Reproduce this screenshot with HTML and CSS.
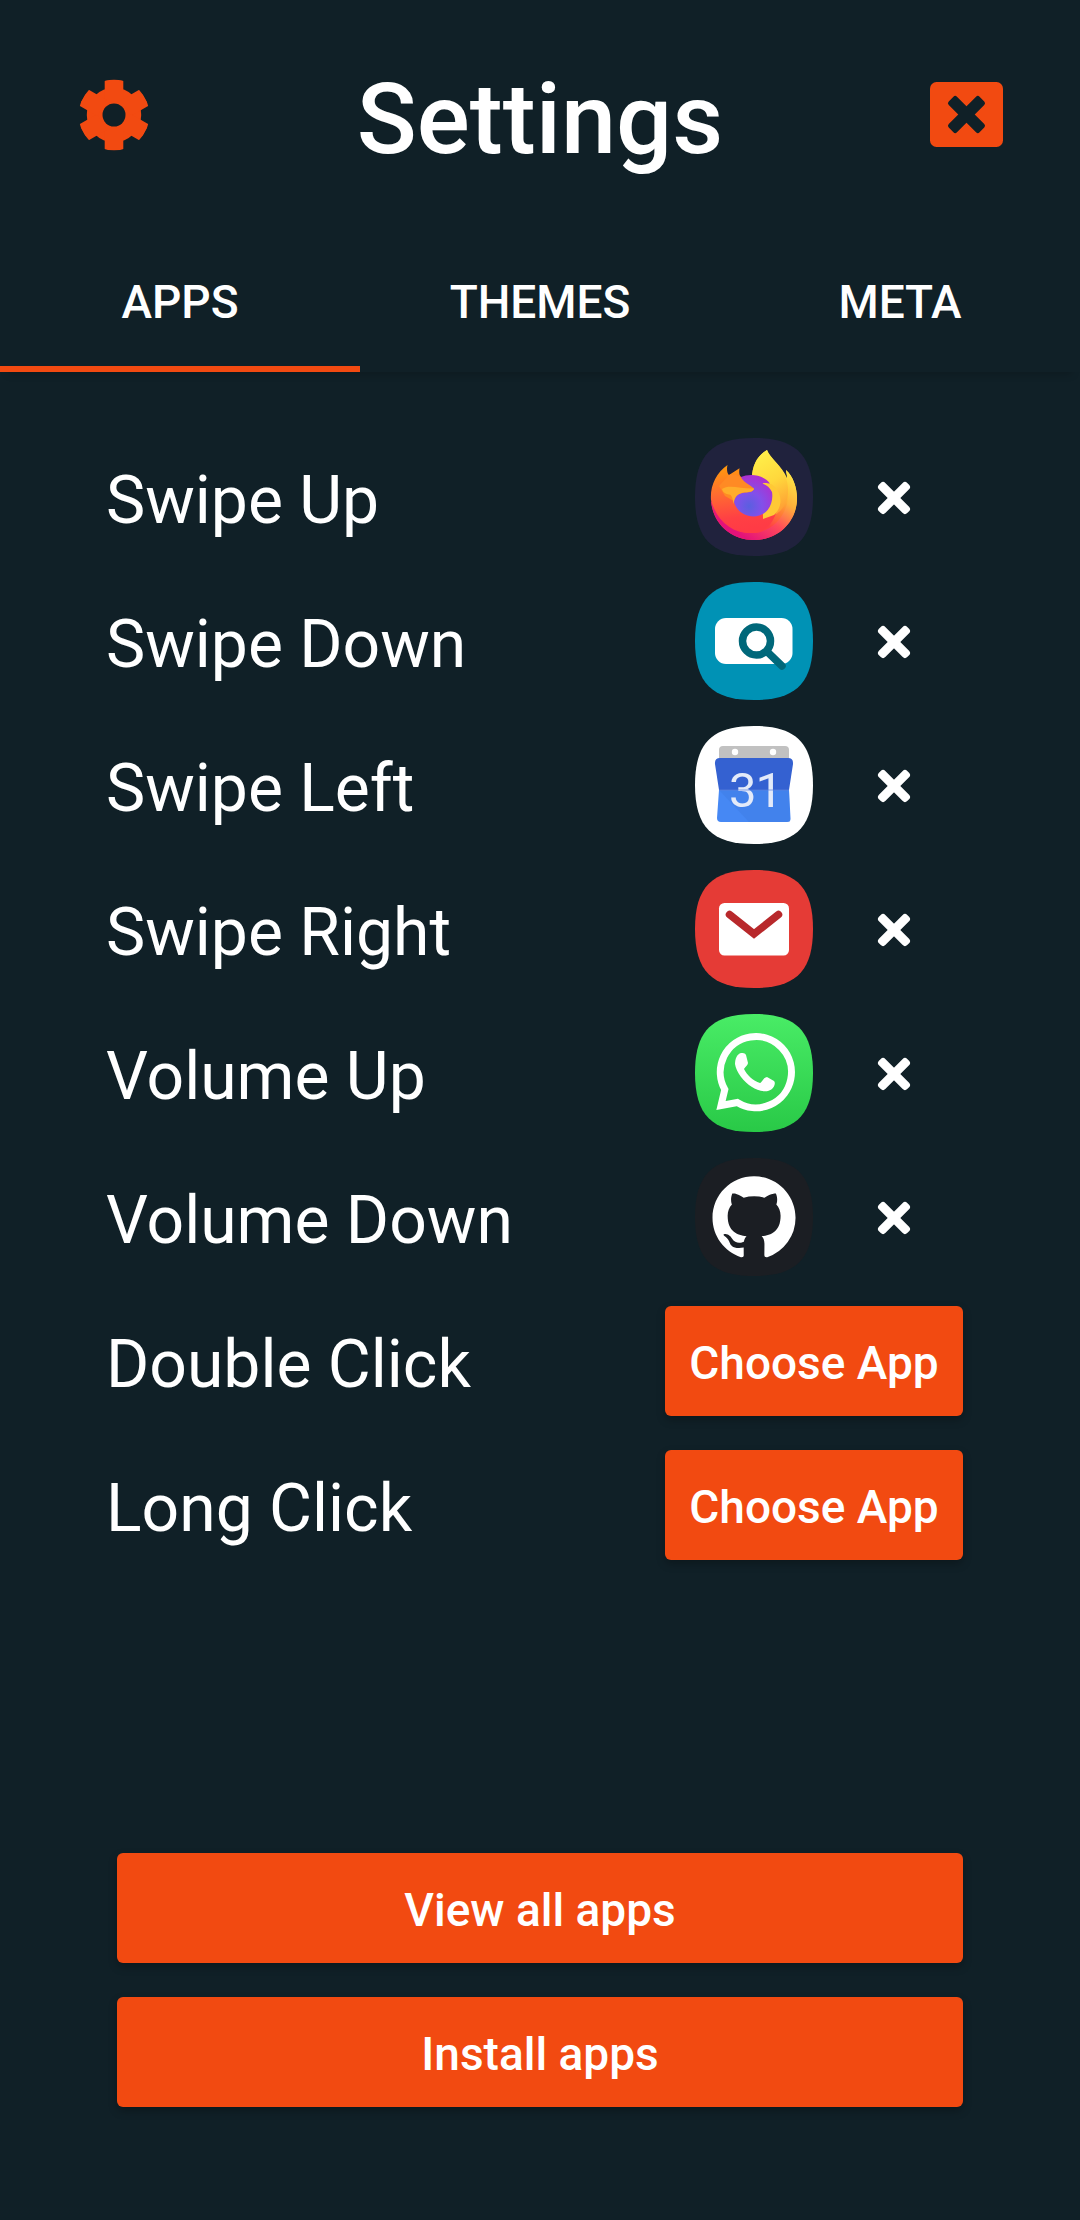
FILE: index.html
```html
<!DOCTYPE html>
<html lang="en">
<head>
<meta charset="utf-8">
<title>Settings</title>
<link rel="stylesheet" href="styles.css">
</head>
<body>
<svg width="0" height="0" class="defs" aria-hidden="true">
  <defs>
    <path id="squircle" d="M59 0C101 0 118 17 118 59S101 118 59 118 0 101 0 59 17 0 59 0Z"/>
    <g id="cross">
      <rect x="-4" y="11.500" width="40" height="9" rx="3.200" transform="rotate(45 16 16)"/>
      <rect x="-4" y="11.500" width="40" height="9" rx="3.200" transform="rotate(-45 16 16)"/>
    </g>
    <linearGradient id="ffBody" x1="0.85" y1="0.1" x2="0.25" y2="0.9">
      <stop offset="0" stop-color="#fff44f"/><stop offset=".3" stop-color="#ffc234"/><stop offset=".52" stop-color="#ff7a36"/><stop offset=".7" stop-color="#ff4143"/><stop offset="1" stop-color="#ff3647"/>
    </linearGradient>
    <linearGradient id="ffFace" gradientUnits="userSpaceOnUse" x1="38" y1="28" x2="46" y2="92">
      <stop offset="0" stop-color="#ff980e"/><stop offset=".4" stop-color="#ff6d30"/><stop offset=".8" stop-color="#ff4044"/><stop offset="1" stop-color="#ff3b45"/>
    </linearGradient>
    <linearGradient id="ffTail" x1="0.3" y1="0" x2="0.6" y2="1">
      <stop offset="0" stop-color="#fff04a"/><stop offset=".5" stop-color="#ffd83c"/><stop offset="1" stop-color="#ff9a34"/>
    </linearGradient>
    <linearGradient id="ffEdge" gradientUnits="userSpaceOnUse" x1="96" y1="34" x2="50" y2="100">
      <stop offset="0" stop-color="#ffe847"/><stop offset=".35" stop-color="#ffb03a"/><stop offset=".65" stop-color="#ff4a5a"/><stop offset="1" stop-color="#e3127a"/>
    </linearGradient>
    <radialGradient id="ffGlobe" cx=".4" cy=".75" r=".75">
      <stop offset="0" stop-color="#5a5fe0"/><stop offset=".45" stop-color="#8250ea"/><stop offset="1" stop-color="#ae2fcf"/>
    </radialGradient>
    <linearGradient id="waBg" x1="0" y1="0" x2="0" y2="1">
      <stop offset="0" stop-color="#49ec66"/><stop offset="1" stop-color="#29c947"/>
    </linearGradient>
    <clipPath id="gearClip"><circle cx="36" cy="36" r="35.500"/></clipPath>
  </defs>
</svg>
<div class="screen">
  <header class="header">
    <svg class="gear" viewBox="0 0 72 72">
      <g clip-path="url(#gearClip)" fill="#f24a11">
        <circle cx="36" cy="36" r="27.200"/>
        <path id="tooth" d="M26.700 22V2Q26.700 .5 28.500 .5H43.500Q45.300 .5 45.300 2V22Z"/>
        <use href="#tooth" transform="rotate(60 36 36)"/>
        <use href="#tooth" transform="rotate(120 36 36)"/>
        <use href="#tooth" transform="rotate(180 36 36)"/>
        <use href="#tooth" transform="rotate(240 36 36)"/>
        <use href="#tooth" transform="rotate(300 36 36)"/>
      </g>
      <circle cx="36" cy="36" r="11.500" fill="#102027"/>
    </svg>
    <h1 class="title">Settings</h1>
    <svg class="close" viewBox="0 0 73 65">
      <rect width="73" height="65" rx="6.500" fill="#f24a11"/>
      <g fill="#102027">
        <rect x="14.700" y="26.700" width="43.600" height="11.600" rx="2.500" transform="rotate(45 36.500 32.500)"/>
        <rect x="14.700" y="26.700" width="43.600" height="11.600" rx="2.500" transform="rotate(-45 36.500 32.500)"/>
      </g>
    </svg>
  </header>
  <nav class="tabs">
    <div class="tab active">APPS</div>
    <div class="tab">THEMES</div>
    <div class="tab">META</div>
  </nav>
  <main class="rows">
    <div class="row"><span class="label">Swipe Up</span>
      <svg class="app" viewBox="0 0 118 118">
        <use href="#squircle" fill="#20223d"/>
        <path fill="url(#ffBody)" d="M16 60C16 75 30 55 57 40C57 27 63 17 72 12C75 20 87 28 92 40C92 37 91 34 91 32C98 38 102 50 102 60C102 84 83 102 59 102S16 84 16 60Z"/>
        <path fill="url(#ffEdge)" d="M91 32C98 38 102 50 102 60C102 84 83 102 59 102C37 102 18 87 16 62C24 85 40 96 60 95C82 92 96 72 94 45C93 39 91 35 91 32Z"/>
        <path fill="url(#ffTail)" d="M57 40C57 27 63 17 72 12C75 22 92 30 93 50C94 66 86 75 75 79C83 65 76 50 64 42Z"/>
        <path fill="url(#ffFace)" d="M32.500 27C31.500 31 32 35 34 37L44.500 30.300C44 34 44 37 46 39L50 60L50 76L82 72C78 86 70 95 58 95C38 96 22 84 16 62C15 48 21 35 32.500 27Z"/>
        <path fill="#ffc935" d="M67.500 45.500C71 44.500 73 46 76 46C87 53 89 68 79 77L68 81Z"/>
        <path fill="url(#ffGlobe)" d="M46 39C54 35.500 68 36 75 45.500C72 45.500 70 44.500 67.500 45.500C72 47 75 50 77 54C79 66 72 78.500 58.500 78.500C47 78.500 38.500 69.500 38.500 60Z"/>
        <path fill="#ff8a24" d="M34 37C38 36 42 37 46 39C48 44 54 46 59 50.500C59 53 55 54.500 50 54.500C43 55.500 40 58 38.700 63L30 58L24 48Z"/>
        <path fill="#ffad2b" d="M27 51C34 46 46 51 59 50.500C58 54.500 53 54 48 54.500C42 56 39.500 59 38.700 66C37.500 60 37 57 34 56.500C31 56 28 55 27 51Z"/>
      </svg>
      <svg class="remove" viewBox="0 0 32 32"><use href="#cross"/></svg></div>
    <div class="row"><span class="label">Swipe Down</span>
      <svg class="app" viewBox="0 0 118 118">
        <use href="#squircle" fill="#0092b5"/>
        <rect x="20" y="36" width="77.500" height="46" rx="11" fill="#fff"/>
        <circle cx="61.500" cy="59" r="14" fill="#fff" stroke="#00687a" stroke-width="7.500"/>
        <path d="M73 70.500L87 84" stroke="#00687a" stroke-width="7.500" stroke-linecap="round"/>
      </svg>
      <svg class="remove" viewBox="0 0 32 32"><use href="#cross"/></svg></div>
    <div class="row"><span class="label">Swipe Left</span>
      <svg class="app" viewBox="0 0 118 118">
        <use href="#squircle" fill="#fff"/>
        <path d="M24 34V24Q24 20 28 20H90Q94 20 94 24V34Z" fill="#c1c1c1"/>
        <circle cx="40" cy="26" r="3.200" fill="#fff"/><circle cx="78" cy="26" r="3.200" fill="#fff"/>
        <path d="M24 64H94L95.500 92Q96 96 92 96H26Q22 96 22 92Z" fill="#4688f4"/>
        <path d="M24 64L54 96H95L94 64Z" fill="#3b78dc" opacity=".35"/>
        <path d="M25 32H93Q98.500 32 98 38L94 64H24L20 38Q19.500 32 25 32Z" fill="#3461d1"/>
        <text x="60.500" y="80.500" class="date">31</text>
        <path d="M24 64H94" stroke="#5b83dd" stroke-width=".7"/>
      </svg>
      <svg class="remove" viewBox="0 0 32 32"><use href="#cross"/></svg></div>
    <div class="row"><span class="label">Swipe Right</span>
      <svg class="app" viewBox="0 0 118 118">
        <use href="#squircle" fill="#e53b36"/>
        <rect x="24" y="33" width="70" height="52.500" rx="5.500" fill="#fff"/>
        <path d="M34.500 44.500L59 64L83.500 44.500" fill="none" stroke="#b8282b" stroke-width="7.500" stroke-linecap="round"/>
      </svg>
      <svg class="remove" viewBox="0 0 32 32"><use href="#cross"/></svg></div>
    <div class="row"><span class="label">Volume Up</span>
      <svg class="app" viewBox="0 0 118 118">
        <use href="#squircle" fill="url(#waBg)"/>
        <path fill="none" stroke="#fff" stroke-width="7" d="M26 91.500L29.800 75.500A35.600 35.600 0 1 1 42.300 88.500Z"/>
        <path fill="#fff" d="M46 39C48 39 50 39 51 41L53 49C53 51 50 53 49 55C52 61 58 67 65 69C67 68 69 63 72 63L79 67C81 69 79 73 77 75C71 80 62 76 57 73C49 68 41 58 40 50C40 45 42 40 46 39Z"/>
      </svg>
      <svg class="remove" viewBox="0 0 32 32"><use href="#cross"/></svg></div>
    <div class="row"><span class="label">Volume Down</span>
      <svg class="app" viewBox="0 0 118 118">
        <use href="#squircle" fill="#1b1e23"/>
        <path transform="translate(17.500 18.300) scale(5.190)" fill="#fff" d="M8 0C3.580 0 0 3.580 0 8c0 3.540 2.290 6.530 5.470 7.590.4.070.55-.17.55-.38 0-.19-.01-.82-.01-1.490-2.010.37-2.530-.49-2.690-.94-.09-.23-.48-.94-.82-1.130-.28-.15-.68-.52-.01-.53.63-.01 1.080.58 1.230.82.72 1.210 1.870.87 2.330.66.07-.52.28-.87.51-1.070-1.780-.2-3.640-.89-3.640-3.950 0-.87.31-1.590.82-2.150-.08-.2-.36-1.020.08-2.120 0 0 .67-.21 2.200.82.64-.18 1.320-.27 2-.27s1.360.09 2 .27c1.530-1.040 2.200-.82 2.200-.82.44 1.100.16 1.920.08 2.120.51.56.82 1.270.82 2.150 0 3.070-1.870 3.750-3.650 3.950.29.25.54.73.54 1.480 0 1.070-.01 1.930-.01 2.200 0 .21.15.46.55.38A8.010 8.010 0 0 0 16 8c0-4.420-3.580-8-8-8Z"/>
      </svg>
      <svg class="remove" viewBox="0 0 32 32"><use href="#cross"/></svg></div>
    <div class="row"><span class="label">Double Click</span><button class="btn choose">Choose App</button></div>
    <div class="row"><span class="label">Long Click</span><button class="btn choose">Choose App</button></div>
  </main>
  <footer class="actions">
    <button class="btn">View all apps</button>
    <button class="btn">Install apps</button>
  </footer>
</div>
</body>
</html>
```
FILE: styles.css
```css
* { box-sizing: border-box; }
body { margin: 0; background: #102027; color: #fff; font-family: Roboto, sans-serif; }
.defs { display: block; height: 0; }
.screen { width: 1080px; height: 2220px; display: flex; flex-direction: column; overflow: hidden; }
.header { height: 229px; padding: 0 77px 0 78px; display: flex; justify-content: space-between; align-items: center; }
.gear { width: 72px; height: 72px; }
.close { width: 73px; height: 65px; }
.title { margin: 0; padding-top: 8px; font-size: 99px; line-height: 116px; font-weight: 500; }
.tabs { height: 143px; display: grid; grid-template-columns: 1fr 1fr 1fr; box-shadow: 0 10px 8px -8px rgba(0, 0, 0, .2); }
.tab { display: flex; align-items: center; justify-content: center; padding-top: 9px; border-bottom: 6px solid transparent; font-size: 46px; font-weight: 500; }
.active { border-color: #f24a11; }
.rows { margin-top: 53px; padding: 0 117px 0 106px; }
.row { height: 144px; display: flex; align-items: center; }
.label { flex: 1; font-size: 66px; line-height: 78px; padding-top: 8px; }
.app { width: 118px; height: 118px; margin-right: 65px; }
.remove { width: 32px; height: 32px; margin: 2px 53px 0 0; fill: #fff; overflow: visible; }
.date { font: 400 49px Roboto, sans-serif; fill: #e3eaf9; text-anchor: middle; letter-spacing: -1px; }
.btn { height: 110px; padding: 3px 0 0; border: 0; border-radius: 6px; background: #f24a11; color: #fff; font: 500 46px Roboto, sans-serif; box-shadow: 0 4px 8px rgba(0, 0, 0, .25); }
.choose { width: 298px; }
.actions { margin-top: 276px; padding: 0 117px; display: flex; flex-direction: column; gap: 34px; }
```
